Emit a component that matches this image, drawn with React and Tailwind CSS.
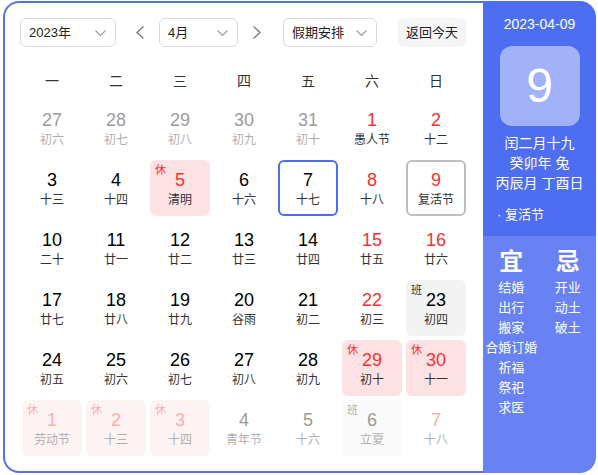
const weeks = [
  [
    { d: 27, l: '初六', dim: true },
    { d: 28, l: '初七', dim: true },
    { d: 29, l: '初八', dim: true },
    { d: 30, l: '初九', dim: true },
    { d: 31, l: '初十', dim: true },
    { d: 1, l: '愚人节', red: true },
    { d: 2, l: '十二', red: true },
  ],
  [
    { d: 3, l: '十三' },
    { d: 4, l: '十四' },
    { d: 5, l: '清明', red: true, tag: '休' },
    { d: 6, l: '十六' },
    { d: 7, l: '十七', today: true },
    { d: 8, l: '十八', red: true },
    { d: 9, l: '复活节', red: true, picked: true },
  ],
  [
    { d: 10, l: '二十' },
    { d: 11, l: '廿一' },
    { d: 12, l: '廿二' },
    { d: 13, l: '廿三' },
    { d: 14, l: '廿四' },
    { d: 15, l: '廿五', red: true },
    { d: 16, l: '廿六', red: true },
  ],
  [
    { d: 17, l: '廿七' },
    { d: 18, l: '廿八' },
    { d: 19, l: '廿九' },
    { d: 20, l: '谷雨' },
    { d: 21, l: '初二' },
    { d: 22, l: '初三', red: true },
    { d: 23, l: '初四', tag: '班' },
  ],
  [
    { d: 24, l: '初五' },
    { d: 25, l: '初六' },
    { d: 26, l: '初七' },
    { d: 27, l: '初八' },
    { d: 28, l: '初九' },
    { d: 29, l: '初十', red: true, tag: '休' },
    { d: 30, l: '十一', red: true, tag: '休' },
  ],
  [
    { d: 1, l: '劳动节', red: true, tag: '休', dim: true },
    { d: 2, l: '十三', red: true, tag: '休', dim: true },
    { d: 3, l: '十四', red: true, tag: '休', dim: true },
    { d: 4, l: '青年节', dim: true },
    { d: 5, l: '十六', dim: true },
    { d: 6, l: '立夏', tag: '班', dim: true },
    { d: 7, l: '十八', red: true, dim: true },
  ],
]

const weekdays = ['一', '二', '三', '四', '五', '六', '日']

const good = ['结婚', '出行', '搬家', '合婚订婚', '祈福', '祭祀', '求医']
const bad = ['开业', '动土', '破土']

function Chevron() {
  return (
    <svg width="11" height="6" viewBox="0 0 11 6" fill="none">
      <polyline points="0.5,0.5 5.5,5.5 10.5,0.5" stroke="#9a9a9a" strokeWidth="1.1" />
    </svg>
  )
}

function Arrow({ dir }) {
  const pts = dir === 'left' ? '7.5,0.5 1,6.5 7.5,12.5' : '0.5,0.5 7,6.5 0.5,12.5'
  return (
    <svg width="8" height="13" viewBox="0 0 8 13" fill="none">
      <polyline points={pts} stroke="#777" strokeWidth="1.3" />
    </svg>
  )
}

function Select({ label, width }) {
  return (
    <div
      className={`flex h-[29px] items-center justify-between rounded-[6px] border border-[#d9d9d9] bg-white pl-[8px] pr-[9px] text-[13px] text-[#222] ${width}`}
    >
      <span>{label}</span>
      <Chevron />
    </div>
  )
}

function Cell({ c }) {
  let box = 'border-2 border-transparent'
  if (c.tag === '休') box = 'border-2 border-transparent bg-[#fde2e3]'
  if (c.tag === '班') box = 'border-2 border-transparent bg-[#f3f3f4]'
  if (c.today) box = 'border-2 border-[#4e6ef2]'
  if (c.picked) box = 'border-2 border-[#bdbdbd]'

  return (
    <div
      className={`relative flex h-[56px] flex-col items-center rounded-[6px] pt-[8px] ${box} ${c.dim ? 'opacity-40' : ''}`}
    >
      {c.tag && (
        <span
          className={`absolute left-[3px] top-[1px] text-[11px] leading-[14px] ${c.tag === '休' ? 'text-[#f73131]' : 'text-[#333]'}`}
        >
          {c.tag}
        </span>
      )}
      <span className={`text-[18px] leading-[20px] ${c.red ? 'text-[#f73131]' : 'text-black'}`}>{c.d}</span>
      <span className="mt-[2px] text-[12px] leading-[16px] text-[#333]">{c.l}</span>
    </div>
  )
}

export default function App() {
  return (
    <div className="bg-white pl-[3px] pt-[1px] font-['Liberation_Sans','Noto_Sans_CJK_SC',sans-serif]">
      <div className="flex h-[472px] w-[593px]">
        <div className="w-[480px] rounded-l-[16px] border-y-2 border-l-2 border-[#5672dc] bg-white pl-[15px] pt-[15px]">
          <div className="flex items-center">
            <Select label="2023年" width="w-[96px]" />
            <div className="ml-[20px] flex items-center">
              <Arrow dir="left" />
            </div>
            <div className="ml-[15px]">
              <Select label="4月" width="w-[79px]" />
            </div>
            <div className="ml-[15px] flex items-center">
              <Arrow dir="right" />
            </div>
            <div className="ml-[22px]">
              <Select label="假期安排" width="w-[94px]" />
            </div>
            <div className="ml-[21px] flex h-[29px] w-[68px] items-center justify-center rounded-[6px] bg-[#f5f5f6] text-[13px] text-[#222]">
              返回今天
            </div>
          </div>

          <div className="ml-[2px] mt-[24px] grid w-[444px] grid-cols-7 gap-x-[4px]">
            {weekdays.map((w) => (
              <div key={w} className="text-center text-[14px] leading-[20px] text-[#333]">
                {w}
              </div>
            ))}
          </div>

          <div className="ml-[2px] mt-[9px] grid w-[444px] grid-cols-7 gap-[4px]">
            {weeks.flat().map((c, i) => (
              <Cell key={i} c={c} />
            ))}
          </div>
        </div>

        <div className="flex w-[113px] flex-col overflow-hidden rounded-r-[16px] text-white">
          <div className="flex h-[235px] flex-col items-center bg-[#4e6ef2] pt-[13px]">
            <div className="text-[14px] leading-[20px]">2023-04-09</div>
            <div className="mt-[12px] flex h-[80px] w-[80px] items-center justify-center rounded-[12px] bg-[#a1b2f8] text-[48px] leading-none">
              9
            </div>
            <div className="mt-[7px] text-center text-[14px] leading-[20px]">
              <div>闰二月十九</div>
              <div>癸卯年 兔</div>
              <div>丙辰月 丁酉日</div>
            </div>
            <div className="mt-[12px] w-full pl-[14px] text-[13px] leading-[20px]">· 复活节</div>
          </div>
          <div className="flex flex-1 bg-[#6882f3] pt-[12px]">
            <div className="flex w-1/2 flex-col items-center">
              <div className="text-[24px] font-bold leading-[28px]">宜</div>
              <div className="mt-[2px] flex flex-col items-center text-[13px] leading-[20px]">
                {good.map((g) => (
                  <div key={g} className="whitespace-nowrap">{g}</div>
                ))}
              </div>
            </div>
            <div className="flex w-1/2 flex-col items-center">
              <div className="text-[24px] font-bold leading-[28px]">忌</div>
              <div className="mt-[2px] flex flex-col items-center text-[13px] leading-[20px]">
                {bad.map((g) => (
                  <div key={g}>{g}</div>
                ))}
              </div>
            </div>
          </div>
        </div>
      </div>
    </div>
  )
}
